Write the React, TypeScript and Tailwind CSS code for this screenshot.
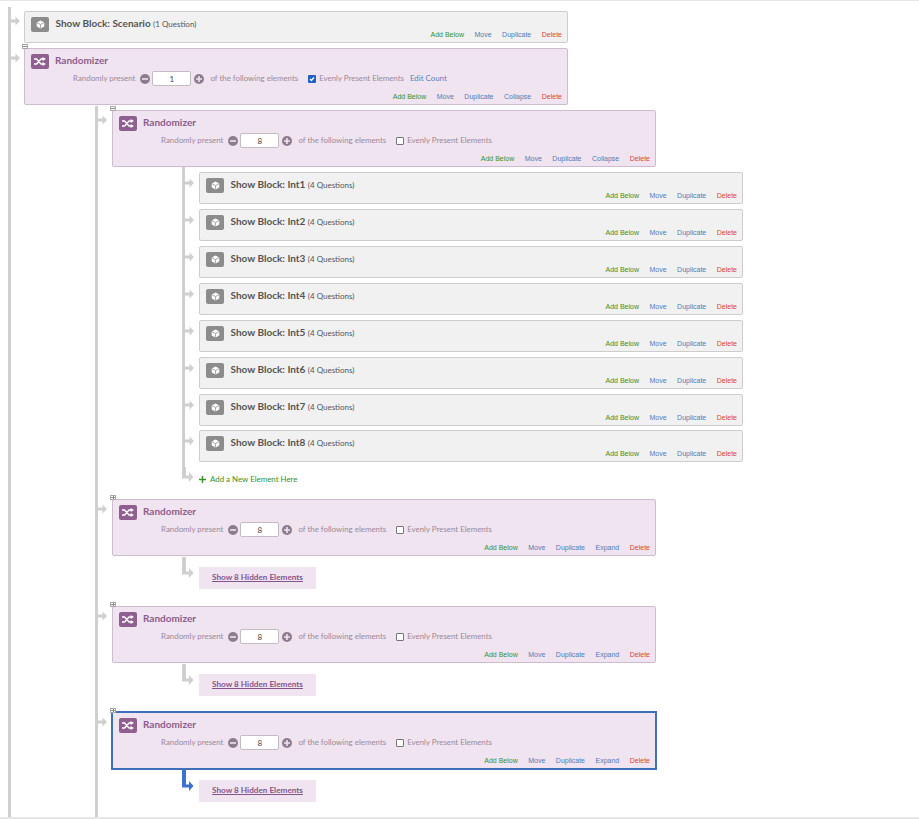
import React from "react";

const lato = "font-['Lato','Noto_Sans',sans-serif]";

function Arrow({ blue = false }: { blue?: boolean }) {
  return (
    <svg width="9" height="10" viewBox="0 0 9 10" className="block shrink-0">
      <path d="M0 3.5h4.5V0.5L9 5l-4.5 4.5v-3H0z" fill={blue ? "#3b72d0" : "#cfcfcf"} />
    </svg>
  );
}

function Elbow({ blue = false, h = 20 }: { blue?: boolean; h?: number }) {
  const c = blue ? "#3b72d0" : "#cfcfcf";
  const y = h - 5;
  return (
    <svg width="12" height={h} viewBox={`0 0 12 ${h}`} className="block shrink-0">
      <path d={`M0 0h4v${y - 1.5}h3v-3.5l4.5 5-4.5 5v-3.5H0z`} fill={c} />
    </svg>
  );
}

function Cube() {
  return (
    <span className="flex h-[15px] w-[18px] shrink-0 items-center justify-center rounded-[2px] bg-[#8c8c8c]">
      <svg width="9" height="9" viewBox="0 0 10 10">
        <path d="M5 .5 9.2 2.8v4.4L5 9.5.8 7.2V2.8z" fill="#fff" />
        <path d="M.9 2.9 5 5.1l4.1-2.2M5 5.1v4.3" fill="none" stroke="#8c8c8c" strokeWidth="0.8" />
      </svg>
    </span>
  );
}

function ShuffleIcon() {
  return (
    <span className="flex h-[15px] w-[18px] shrink-0 items-center justify-center rounded-[2px] bg-[#8f5f90]">
      <svg width="12" height="9" viewBox="0 0 12 9">
        <path d="M0 2h2.6l4.4 5h2M0 7h2.6l4.4-5h2" fill="none" stroke="#fff" strokeWidth="1.3" />
        <path d="M8.6 0 12 2 8.6 4zM8.6 5 12 7 8.6 9z" fill="#fff" />
      </svg>
    </span>
  );
}

function RoundBtn({ plus = false }: { plus?: boolean }) {
  return (
    <svg width="10" height="10" viewBox="0 0 10 10" className="block shrink-0">
      <circle cx="5" cy="5" r="5" fill="#8d7c8d" />
      <path d={plus ? "M2 4.2h2.2V2h1.6v2.2H8v1.6H5.8V8H4.2V5.8H2z" : "M2 4.2h6v1.6H2z"} fill="#f1e4f1" />
    </svg>
  );
}

function Actions({ last }: { last?: string }) {
  return (
    <div className="flex h-[10px] items-center justify-end gap-[10.5px] font-['Liberation_Sans',sans-serif] text-[7px] leading-[10px] whitespace-nowrap">
      <span className="text-[#38902a]">Add Below</span>
      <span className="text-[#4f7cb5]">Move</span>
      <span className="text-[#4f7cb5]">Duplicate</span>
      {last ? <span className="text-[#4f7cb5]">{last}</span> : null}
      <span className="text-[#d9472f]">Delete</span>
    </div>
  );
}

function Block({ name, count }: { name: string; count: string }) {
  return (
    <div className="flex h-[32px] w-[544px] items-stretch justify-between rounded-[2px] border border-[#cdcdcd] bg-[#f1f1f1] pr-[5px] pl-[6px]">
      <div className="flex items-start gap-[6.5px] pt-[5px]">
        <Cube />
        <p className={`${lato} -mt-[1px] text-[10px] leading-[14px] font-bold whitespace-nowrap text-[#555555]`}>
          Show Block: {name} <span className="text-[8px] font-normal">({count})</span>
        </p>
      </div>
      <div className="self-end pb-[2px]">
        <Actions />
      </div>
    </div>
  );
}

function Randomizer({
  value,
  checked = false,
  last,
  selected = false,
  expanded = false,
}: {
  value: string;
  checked?: boolean;
  last: string;
  selected?: boolean;
  expanded?: boolean;
}) {
  return (
    <div
      className={`relative h-[57px] w-[544px] border bg-[#f1e4f1] pr-[5px] pl-[6px] ${
        selected ? "border-[#3f6fb8] outline-1 outline-[#3f6fb8]" : "rounded-[2px] border-[#cdbccd]"
      }`}
    >
      <span className="absolute -top-[5px] -left-[3px] z-10 flex h-[5px] w-[6px] items-center justify-center border border-[#a9a9a9] bg-white">
        <span className="h-[1px] w-[4px] bg-[#8a8a8a]" />
        {expanded ? <span className="absolute h-[3px] w-[1px] bg-[#8a8a8a]" /> : null}
      </span>
      <div className="flex items-start gap-[6px] pt-[5px]">
        <ShuffleIcon />
        <p className={`${lato} -mt-[1px] text-[10px] leading-[14px] font-bold text-[#8b5d8c]`}>Randomizer</p>
      </div>
      <div className={`${lato} mt-[2px] flex h-[15px] items-center pl-[42px] text-[7.9px] whitespace-nowrap text-[#9a889a]`}>
        <span>Randomly present</span>
        <span className="ml-[5px]">
          <RoundBtn />
        </span>
        <span className="ml-[2px] flex h-[15px] w-[39px] items-center justify-center rounded-[2px] border border-[#c4bbc4] bg-white text-[8px] text-[#444]">
          {value}
        </span>
        <span className="ml-[3px]">
          <RoundBtn plus />
        </span>
        <span className="ml-[6px]">of the following elements</span>
        {checked ? (
          <span className="ml-[10px] flex h-[8px] w-[8px] items-center justify-center rounded-[1px] bg-[#1f62c4]">
            <svg width="6" height="6" viewBox="0 0 6 6">
              <path d="M1 3l1.4 1.5L5 1.5" fill="none" stroke="#fff" strokeWidth="1.2" />
            </svg>
          </span>
        ) : (
          <span className="ml-[10px] h-[8px] w-[8px] rounded-[1px] border border-[#777] bg-white" />
        )}
        <span className="ml-[3px]">Evenly Present Elements</span>
        {checked ? <span className="ml-[6px] text-[#5c7fb5]">Edit Count</span> : null}
      </div>
      <div className="mt-[6px]">
        <Actions last={last} />
      </div>
    </div>
  );
}

function HiddenRow({ blue = false }: { blue?: boolean }) {
  return (
    <div className="ml-[84px] flex">
      <div className="w-[17px] pt-[1px]">
        <Elbow blue={blue} h={21} />
      </div>
      <div className={`${lato} mt-[11px] flex h-[22px] w-[117px] items-center justify-center bg-[#f1e4f1] pb-[1px] text-[8.2px] font-bold text-[#84558a] underline`}>
        Show 8 Hidden Elements
      </div>
    </div>
  );
}

const ints = ["Int1", "Int2", "Int3", "Int4", "Int5", "Int6", "Int7", "Int8"];

export default function App() {
  return (
    <div className="flex h-[819px] w-[919px] flex-col overflow-hidden border-t border-b-2 border-t-[#e6e6e6] border-b-[#e6e6e6] bg-white">
      <div className="mt-[6px] ml-[8px] flex flex-1 flex-col border-l-[3px] border-[#cfcfcf] pt-[4px]">
        {/* top level */}
        <div className="flex">
          <div className="w-[13px] pt-[5px]">
            <Arrow />
          </div>
          <Block name="Scenario" count="1 Question" />
        </div>
        <div className="mt-[5px] flex">
          <div className="w-[13px] pt-[5px]">
            <Arrow />
          </div>
          <Randomizer value="1" checked last="Collapse" />
        </div>

        {/* nested randomizers */}
        <div className="mt-[1px] ml-[84px] flex flex-1 flex-col border-l-[3px] border-[#cfcfcf] pt-[4px]">
          <div className="flex">
            <div className="w-[14px] pt-[5px]">
              <Arrow />
            </div>
            <Randomizer value="8" last="Collapse" />
          </div>

          <div className="ml-[84px] flex flex-col">
            <div className="flex flex-col border-l-[3px] border-[#cfcfcf] pt-[5px]">
              {ints.map((n) => (
                <div key={n} className={n === "Int7" ? "mb-[4px] flex" : "mb-[5px] flex"}>
                  <div className="w-[14px] pt-[6px]">
                    <Arrow />
                  </div>
                  <Block name={n} count="4 Questions" />
                </div>
              ))}
            </div>
            <div className="flex h-[24px]">
              <div className="w-[17px]">
                <Elbow h={15} />
              </div>
              <div className={`${lato} flex h-[24px] items-center pt-[1px] text-[7.9px] text-[#38902a]`}>
                <svg width="7" height="7" viewBox="0 0 7 7" className="mr-[4px] block">
                  <path d="M2.8 0h1.4v2.8H7v1.4H4.2V7H2.8V4.2H0V2.8h2.8z" fill="#38902a" />
                </svg>
                Add a New Element Here
              </div>
            </div>
          </div>

          <div className="mt-[8px] flex">
            <div className="w-[14px] pt-[5px]">
              <Arrow />
            </div>
            <Randomizer value="8" last="Expand" expanded />
          </div>
          <HiddenRow />

          <div className="mt-[17px] flex">
            <div className="w-[14px] pt-[5px]">
              <Arrow />
            </div>
            <Randomizer value="8" last="Expand" expanded />
          </div>
          <HiddenRow />

          <div className="mt-[16px] flex">
            <div className="w-[14px] pt-[5px]">
              <Arrow />
            </div>
            <Randomizer value="8" last="Expand" selected expanded />
          </div>
          <HiddenRow blue />
        </div>
      </div>
    </div>
  );
}
